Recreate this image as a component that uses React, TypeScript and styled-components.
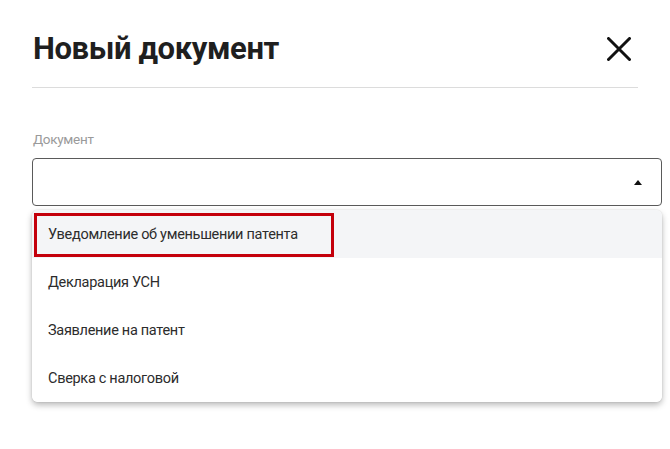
import React, { useState } from 'react';
import styled, { createGlobalStyle } from 'styled-components';

const GlobalStyle = createGlobalStyle`
  html, body {
    margin: 0;
    padding: 0;
    background: #ffffff;
    font-family: Roboto, "Noto Sans", Arial, sans-serif;
  }
`;

const Page = styled.div`
  width: 670px;
  height: 449px;
  box-sizing: border-box;
  padding: 0 8px 0 32px;
  overflow: hidden;
`;

const Header = styled.div`
  width: 606px;
  height: 88px;
  box-sizing: border-box;
  display: flex;
  align-items: center;
  justify-content: space-between;
  padding: 11px 0 0 1px;
  border-bottom: 1px solid #dcdcdc;
`;

const Title = styled.h1`
  margin: 0;
  font-size: 31px;
  line-height: 40px;
  font-weight: 700;
  color: #1f1f1f;
  letter-spacing: -0.4px;
`;

const CloseButton = styled.button`
  width: 24px;
  height: 24px;
  padding: 0;
  margin-right: 7px;
  border: none;
  background: transparent;
  cursor: pointer;
  display: flex;
  align-items: center;
  justify-content: center;
`;

const Field = styled.div`
  margin-top: 41px;
  position: relative;
`;

const Label = styled.div`
  font-size: 13.5px;
  line-height: 20px;
  color: #9a9a9a;
  padding-left: 1px;
  margin-bottom: 9px;
  letter-spacing: -0.3px;
`;

const SelectBox = styled.div`
  height: 48px;
  box-sizing: border-box;
  border: 1.5px solid #5a5a5a;
  border-radius: 4px;
  display: flex;
  align-items: center;
  justify-content: flex-end;
  padding-right: 19px;
  cursor: pointer;
`;

const Caret = styled.span`
  width: 0;
  height: 0;
  border-left: 4.5px solid transparent;
  border-right: 4.5px solid transparent;
  border-bottom: 5px solid #111;
`;

const Menu = styled.ul`
  list-style: none;
  margin: 4px 0 0;
  padding: 0;
  background: #ffffff;
  border-radius: 6px;
  box-shadow: 0 3px 6px rgba(0, 0, 0, 0.28), 0 0 2px rgba(0, 0, 0, 0.12);
  overflow: hidden;
`;

const MenuItem = styled.li<{ active: boolean }>`
  position: relative;
  height: 48px;
  display: flex;
  align-items: center;
  padding-left: 16px;
  font-size: 14.5px;
  letter-spacing: -0.3px;
  color: #2c2c2c;
  background: ${({ active }) => (active ? '#f4f5f7' : '#ffffff')};
  cursor: pointer;
`;

const Highlight = styled.span`
  position: absolute;
  left: 2px;
  top: 3px;
  width: 300px;
  height: 44px;
  box-sizing: border-box;
  border: 3px solid #c4000b;
  pointer-events: none;
`;

const options = [
  'Уведомление об уменьшении патента',
  'Декларация УСН',
  'Заявление на патент',
  'Сверка с налоговой',
];

const App: React.FC = () => {
  const [active] = useState<number>(0);

  return (
    <Page>
      <GlobalStyle />
      <Header>
        <Title>Новый документ</Title>
        <CloseButton aria-label="Закрыть">
          <svg width="24" height="24" viewBox="0 0 24 24">
            <path d="M1.5 1.5 L22.5 22.5 M22.5 1.5 L1.5 22.5" stroke="#111" strokeWidth="3" strokeLinecap="round" />
          </svg>
        </CloseButton>
      </Header>
      <Field>
        <Label>Документ</Label>
        <SelectBox>
          <Caret />
        </SelectBox>
        <Menu>
          {options.map((option, i) => (
            <MenuItem key={option} active={i === active}>
              {i === active && <Highlight />}
              {option}
            </MenuItem>
          ))}
        </Menu>
      </Field>
    </Page>
  );
};

export default App;
